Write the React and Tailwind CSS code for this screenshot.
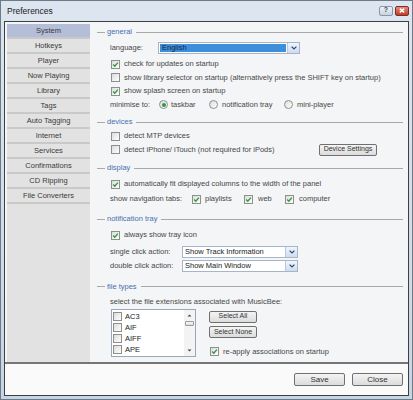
import React from "react";

const font = { fontFamily: '"Liberation Sans", Arial, sans-serif' };

const Check = ({ checked }) => (
  <span className="w-[9px] h-[9px] border border-[#8e8f8f] bg-linear-to-br from-[#dcdcdc] to-white flex items-center justify-center shrink-0">
    {checked && (
      <svg width="7" height="7" viewBox="0 0 7 7">
        <path d="M1.2 3.6 L2.8 5.2 L5.9 1.6" stroke="#2e9a38" strokeWidth="1.4" fill="none" />
      </svg>
    )}
  </span>
);

const Radio = ({ checked }) => (
  <span className="w-[9px] h-[9px] rounded-full border border-[#8e8f8f] bg-linear-to-br from-[#dcdcdc] to-white flex items-center justify-center shrink-0">
    {checked && <span className="w-[4px] h-[4px] rounded-full bg-[#2e9a38]" />}
  </span>
);

const Arrow = () => (
  <span className="w-[12px] shrink-0 bg-linear-to-b from-[#f0f5fc] to-[#cfdcef] border-l border-[#b7c7dc] flex items-center justify-center">
    <svg width="6" height="4" viewBox="0 0 6 4">
      <path d="M0.6 0.6 L3 3 L5.4 0.6" stroke="#2b4777" strokeWidth="1.2" fill="none" />
    </svg>
  </span>
);

const Header = ({ title }) => (
  <div className="h-[12px] flex items-center">
    <span className="ml-[7px] w-[8px] h-px bg-[#a9a9a9]" />
    <span className="ml-[2px] text-[#4a6fae]">{title}</span>
    <span className="ml-[4px] mr-[5px] flex-1 h-px bg-[#a9a9a9]" />
  </div>
);

const CheckRow = ({ checked, children, className = "" }) => (
  <div className={"h-[12px] flex items-center pl-[21px] " + className}>
    <Check checked={checked} />
    <span className="ml-[4px]">{children}</span>
  </div>
);

const Btn = ({ children, className = "" }) => (
  <div
    className={
      "h-[12px] border border-[#707070] rounded-[2px] bg-linear-to-b from-[#f4f4f4] to-[#dcdcdc] flex items-center justify-center text-[#333] " +
      className
    }
  >
    {children}
  </div>
);

const navItems = [
  "System",
  "Hotkeys",
  "Player",
  "Now Playing",
  "Library",
  "Tags",
  "Auto Tagging",
  "Internet",
  "Services",
  "Confirmations",
  "CD Ripping",
  "File Converters",
];

export default function App() {
  return (
    <div
      className="w-[413px] h-[400px] bg-linear-to-b from-[#dce5f0] to-[#c6d5e4] border border-[#6d7a88] text-[7.5px] text-[#474747] overflow-hidden"
      style={font}
    >
      {/* title bar */}
      <div className="h-[20px] flex items-center">
        <span className="ml-[6px] text-[8.5px] text-[#1b1b1b]">Preferences</span>
        <div className="ml-auto mr-[3px] flex gap-[2px] mt-[-1px]">
          <div className="w-[14px] h-[10px] rounded-[2px] border border-[#8b98a8] bg-linear-to-b from-[#eef2f7] to-[#c8d2de] flex items-center justify-center text-[7px] font-bold text-[#3a4a5e]">
            ?
          </div>
          <div className="w-[14px] h-[10px] rounded-[2px] border border-[#7a3028] bg-linear-to-b from-[#e48a78] to-[#c23a26] flex items-center justify-center">
            <svg width="6" height="5" viewBox="0 0 6 5">
              <path d="M0.8 0.6 L5.2 4.4 M5.2 0.6 L0.8 4.4" stroke="white" strokeWidth="1.4" />
            </svg>
          </div>
        </div>
      </div>

      {/* client area */}
      <div className="ml-[3px] w-[405px] h-[375px] border border-[#3f3f3f] flex flex-col bg-[#f4f5f7]">
        <div className="h-[342px] flex border-b-2 border-[#767676]">
          {/* sidebar */}
          <div className="ml-[2px] mt-[2px] w-[83px] h-[338px] bg-[#e2e2e2] flex flex-col">
            {navItems.map((n, i) => (
              <div
                key={n}
                className={
                  "h-[15px] border-b-2 border-[#c9c9c9] flex items-center justify-center text-[#3a3a3a] " +
                  (i === 0 ? "bg-[#b5bed9]" : "")
                }
              >
                {n}
              </div>
            ))}
          </div>

          {/* main */}
          <div className="flex-1 flex flex-col pt-[4px]">
            <Header title="general" />
            <div className="h-[12px] mt-[3.5px] flex items-center pl-[20px]">
              <span className="w-[48px]">language:</span>
              <div className="w-[142px] h-[12px] border border-[#a6b6ca] bg-white flex">
                <div className="flex-1 m-[1px] bg-[#3d8fdc] flex items-center pl-[2px] text-[#13233f]">
                  English
                </div>
                <Arrow />
              </div>
            </div>
            <CheckRow checked className="mt-[4.5px]">check for updates on startup</CheckRow>
            <CheckRow className="mt-[1.5px]">
              show library selector on startup (alternatively press the SHIFT key on startup)
            </CheckRow>
            <CheckRow checked className="mt-[1.5px]">show splash screen on startup</CheckRow>
            <div className="h-[12px] mt-[1.5px] flex items-center pl-[20px]">
              <span className="w-[49px]">minimise to:</span>
              <div className="w-[50px] flex items-center">
                <Radio checked />
                <span className="ml-[3px]">taskbar</span>
              </div>
              <div className="w-[75px] flex items-center">
                <Radio />
                <span className="ml-[4px]">notification tray</span>
              </div>
              <div className="flex items-center">
                <Radio />
                <span className="ml-[4px]">mini-player</span>
              </div>
            </div>

            <div className="mt-[5.5px]">
              <Header title="devices" />
            </div>
            <CheckRow className="mt-[2px]">detect MTP devices</CheckRow>
            <div className="h-[12px] mt-[1.5px] flex items-center pl-[21px]">
              <Check />
              <span className="ml-[4px]">detect iPhone/ iTouch (not required for iPods)</span>
              <div className="flex-1" />
              <Btn className="w-[58px] mr-[31px] h-[11px] text-[7px]">Device Settings</Btn>
            </div>

            <div className="mt-[6.5px]">
              <Header title="display" />
            </div>
            <CheckRow checked className="mt-[4px]">
              automatically fit displayed columns to the width of the panel
            </CheckRow>
            <div className="h-[12px] mt-[3px] flex items-center pl-[20px]">
              <span className="w-[82px]">show navigation tabs:</span>
              <div className="w-[52px] flex items-center">
                <Check checked />
                <span className="ml-[4px]">playlists</span>
              </div>
              <div className="w-[41px] flex items-center">
                <Check checked />
                <span className="ml-[5px]">web</span>
              </div>
              <div className="flex items-center">
                <Check checked />
                <span className="ml-[5px]">computer</span>
              </div>
            </div>

            <div className="mt-[8px]">
              <Header title="notification tray" />
            </div>
            <CheckRow checked className="mt-[4px]">always show tray icon</CheckRow>
            <div className="h-[12px] mt-[4.5px] flex items-center pl-[20px]">
              <span className="w-[72px]">single click action:</span>
              <div className="w-[116px] h-[12px] border border-[#a6b6ca] bg-white flex">
                <div className="flex-1 flex items-center pl-[2px] text-[#222]">Show Track Information</div>
                <Arrow />
              </div>
            </div>
            <div className="h-[12px] mt-[2.5px] flex items-center pl-[20px]">
              <span className="w-[72px]">double click action:</span>
              <div className="w-[116px] h-[12px] border border-[#a6b6ca] bg-white flex">
                <div className="flex-1 flex items-center pl-[2px] text-[#222]">Show Main Window</div>
                <Arrow />
              </div>
            </div>

            <div className="mt-[8.5px]">
              <Header title="file types" />
            </div>
            <div className="h-[12px] mt-[3.5px] flex items-center pl-[20px]">
              select the file extensions associated with MusicBee:
            </div>
            <div className="mt-[1px] flex">
              <div className="ml-[21px] w-[85px] h-[48px] border border-[#9aa7b8] bg-white flex">
                <div className="flex-1 flex flex-col pt-[1px] pl-[1px]">
                  {["AC3", "AIF", "AIFF", "APE"].map((e) => (
                    <div key={e} className="h-[11px] flex items-center">
                      <Check />
                      <span className="ml-[3px] text-[#222]">{e}</span>
                    </div>
                  ))}
                </div>
                <div className="w-[11px] bg-[#f3f3f3] flex flex-col items-center">
                  <svg width="11" height="9" viewBox="0 0 11 9" className="mt-[1px]">
                    <path d="M3.5 5.5 L5.5 3.5 L7.5 5.5 Z" fill="#444" />
                  </svg>
                  <div className="w-[9px] h-[5px] mt-[1px] border border-[#9a9a9a] rounded-[1px] bg-linear-to-b from-[#f8f8f8] to-[#dedede]" />
                  <div className="flex-1" />
                  <svg width="11" height="9" viewBox="0 0 11 9" className="mb-[1px]">
                    <path d="M3.5 3.5 L5.5 5.5 L7.5 3.5 Z" fill="#444" />
                  </svg>
                </div>
              </div>
              <div className="ml-[13px] flex flex-col">
                <Btn className="w-[48px] h-[11px] mt-[1.7px] text-[7px]">Select All</Btn>
                <Btn className="w-[48px] h-[11px] mt-[3.3px] text-[7px]">Select None</Btn>
                <div className="h-[12px] mt-[8px] flex items-center pl-[1px]">
                  <Check checked />
                  <span className="ml-[4px]">re-apply associations on startup</span>
                </div>
              </div>
            </div>
          </div>
        </div>

        {/* bottom buttons */}
        <div className="flex-1 bg-[#fafafa] flex justify-end items-start pt-[9px] pr-[5px] gap-[7px]">
          <Btn className="w-[51px] h-[13px] text-[8px]">Save</Btn>
          <Btn className="w-[51px] h-[13px] text-[8px]">Close</Btn>
        </div>
      </div>
    </div>
  );
}
